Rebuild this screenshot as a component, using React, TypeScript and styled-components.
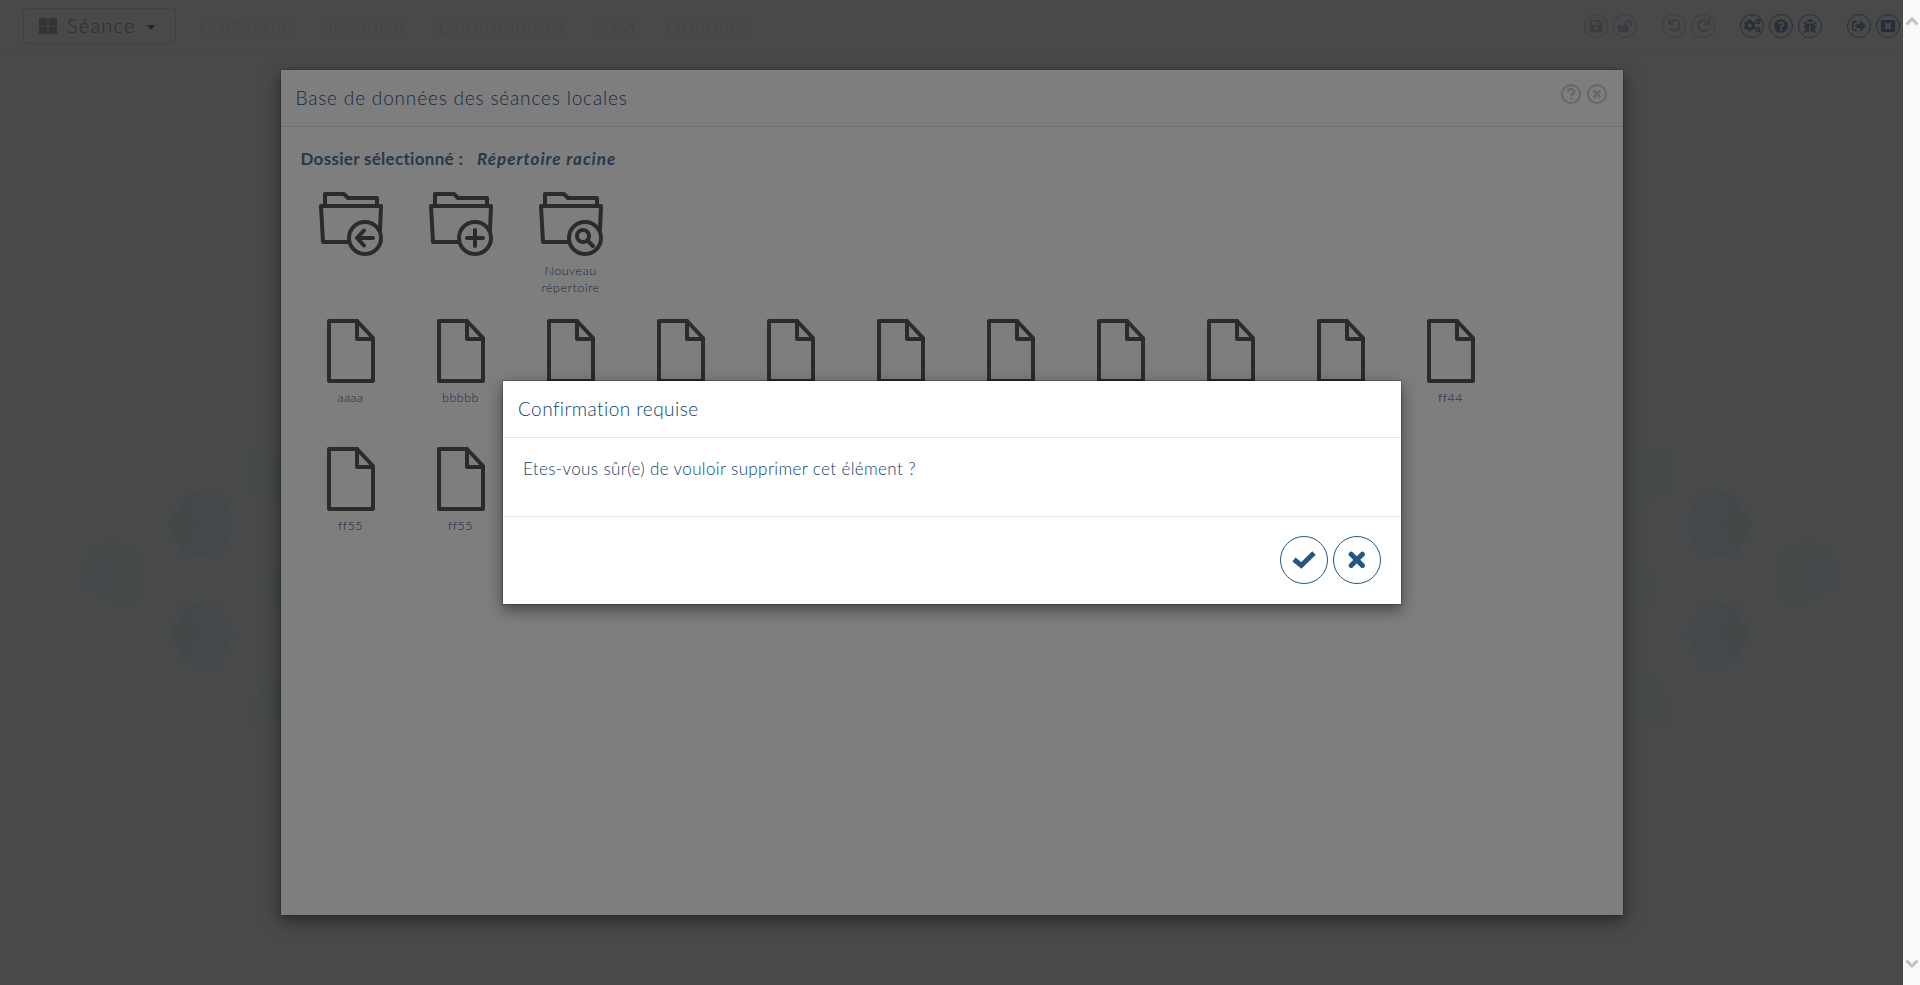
import React from 'react';
import styled, { createGlobalStyle } from 'styled-components';
import { FaSave, FaLockOpen, FaUndo, FaRedo, FaCogs, FaQuestionCircle, FaBug, FaSignOutAlt, FaWindowClose } from 'react-icons/fa';

const Global = createGlobalStyle`
  * { box-sizing: border-box; }
  html, body { margin: 0; padding: 0; }
  body { width: 1920px; height: 985px; overflow: hidden; background: #48494a; font-family: Lato, "Century Gothic", sans-serif; }
`;

const Screen = styled.div`
  position: relative;
  display: flex;
  width: 1920px;
  height: 985px;
  overflow: hidden;
`;

const Page = styled.div`
  width: 1903px;
  height: 985px;
  display: flex;
  flex-direction: column;
  align-items: center;
`;

const TopBar = styled.header`
  width: 100%;
  height: 53px;
  flex: none;
  display: flex;
  align-items: center;
  padding: 0 3px 1px 23px;
  background: #494949;
  border-bottom: 1px solid #454444;
`;

const SessionButton = styled.div`
  width: 153px;
  height: 36px;
  display: flex;
  align-items: center;
  padding-left: 15px;
  border: 1px solid #3f4041;
  border-radius: 4px;
  color: #2c2d2e;
`;

const Label = styled.span<{ $size: number; $ls?: number; $color?: string; $w?: number; $italic?: boolean }>`
  font-size: ${p => p.$size}px;
  letter-spacing: ${p => p.$ls ?? 0}px;
  color: ${p => p.$color ?? 'inherit'};
  font-weight: ${p => p.$w ?? 300};
  font-style: ${p => (p.$italic ? 'italic' : 'normal')};
  line-height: 1.2;
  white-space: nowrap;
`;

const SessionLabel = styled(Label)`
  width: 68px;
  margin-left: 10px;
  padding-bottom: 2px;
`;

const Caret = styled.i`
  margin-left: 12px;
  border: 4.5px solid transparent;
  border-top: 5px solid #252626;
  border-bottom: 0;
  margin-top: 3px;
`;

const Nav = styled.nav`
  display: flex;
  margin-left: 23px;
  padding-bottom: 2px;
  flex: 1;
`;

const NavItem = styled.div<{ $w: number }>`
  width: ${p => p.$w}px;
  flex: none;
`;

const Tools = styled.div`
  display: flex;
  gap: 25px;
`;

const ToolGroup = styled.div`
  display: flex;
  gap: 5px;
`;

const Tool = styled.div<{ $off?: boolean }>`
  width: 24px;
  height: 24px;
  display: flex;
  align-items: center;
  justify-content: center;
  border: 1px solid currentColor;
  border-radius: 50%;
  color: ${p => (p.$off ? '#393d41' : '#27303a')};
`;

const Panel = styled.section`
  width: 1342px;
  height: 845px;
  margin-top: 17px;
  flex: none;
  position: relative;
  background: #7e7e7e;
  box-shadow: 0 5px 15px rgba(0, 0, 0, 0.5), 0 0 0 1px rgba(0, 0, 0, 0.12);
`;

const PanelHead = styled.div<{ $line: string }>`
  height: 57px;
  display: flex;
  align-items: center;
  justify-content: space-between;
  padding: 1px 16px 1px 15px;
  border-bottom: 1px solid ${p => p.$line};
`;

const HeadIcons = styled.div`
  display: flex;
  gap: 6px;
  margin-top: -8px;
`;

const PanelBody = styled.div`
  padding: 22px 15px;
`;

const Folder = styled.div`
  display: flex;
  gap: 14px;
  padding-left: 5px;
  height: 43px;
  color: #26384a;
`;

const Grid = styled.div<{ $h?: number }>`
  display: flex;
  flex-wrap: wrap;
  width: 1210px;
  height: ${p => (p.$h ? `${p.$h}px` : 'auto')};
`;

const Item = styled.div`
  width: 110px;
  height: 128px;
  display: flex;
  flex-direction: column;
  align-items: center;
  color: #172a3e;
  text-align: center;
`;

const Caption = styled.div`
  margin-top: 6px;
  font-size: 12.5px;
  font-weight: 300;
  letter-spacing: 0.5px;
  line-height: 17px;
`;

const Dialog = styled.section`
  position: absolute;
  left: 503px;
  top: 381px;
  width: 898px;
  height: 223px;
  background: #fff;
  color: #0e3f70;
  box-shadow: 0 5px 15px rgba(0, 0, 0, 0.5), 0 0 0 1px rgba(0, 0, 0, 0.2);
`;

const DialogBody = styled.div`
  height: 79px;
  padding: 21px 20px;
  border-bottom: 1px solid #e1e4e4;
`;

const DialogFoot = styled.div`
  display: flex;
  justify-content: flex-end;
  gap: 5px;
  padding: 19px 20px;
`;

const Round = styled.div`
  width: 48px;
  height: 48px;
  display: flex;
  align-items: center;
  justify-content: center;
  border: 1px solid #24567f;
  border-radius: 50%;
`;

const Scroll = styled.aside`
  width: 17px;
  height: 985px;
  display: flex;
  flex-direction: column;
  justify-content: space-between;
  align-items: center;
  padding: 17px 0;
  background: #f9f9f9;
`;

const Backdrop = styled.svg`
  position: absolute;
  left: 0;
  top: 0;
  z-index: -1;
`;

const Shapes = () => (
  <g>
    <g fill="#45494a">
      <path d="M186 492l36 1 10 32-10 28-36 5-18-33z" />
      <path d="M186 603l34 4 13 29-18 31-32-5-13-27z" />
      <path d="M92 548l22-6 28 18-4 36-18 8-36-20z" />
      <path d="M250 452h40v60l-40-26z" />
      <path d="M290 555l-24 20 6 30 18 10zM290 667l-22 12-14 22 2 20h34z" />
    </g>
    <g fill="#43484b">
      <path d="M190 494l32 2 10 28-10 28-36 4-17-30z" />
      <path d="M188 605l31 4 13 27-18 29-30-6-13-25z" />
      <path d="M92 566l12 2 8 16-12 8-10-10z" />
    </g>
    <g fill="#424748">
      <path d="M186 496l10 29-13 24-14-24z" />
      <path d="M187 608l11 26-14 24-12-24z" />
    </g>
  </g>
);

const strokeProps = { fill: 'none', stroke: '#2b2b2b', strokeWidth: 4, strokeLinejoin: 'round' as const, strokeLinecap: 'round' as const };

const FileIcon = () => (
  <svg width="64" height="64" viewBox="0 0 64 64" {...strokeProps}>
    <path d="M10 2h28l16 17v43H10z" />
    <path d="M38 2v18h16" />
  </svg>
);

const FolderIcon = ({ kind }: { kind: 'back' | 'add' | 'find' }) => (
  <svg width="64" height="64" viewBox="0 0 64 64" {...strokeProps}>
    <path d="M6 13V2h19l4 4h29v7" />
    <path d="M29 50H4L2 14h60l-1 24" />
    <circle cx="46" cy="46" r="16" />
    {kind === 'back' && <path d="M54 46H39M45 38.5L38 46l7 7.5" />}
    {kind === 'add' && <path d="M46 38v16M38 46h16" />}
    {kind === 'find' && <><circle cx="44" cy="44" r="6" /><path d="M48.5 48.5L54 54" /></>}
  </svg>
);

const names = ['aaaa', 'bbbbb', '', '', '', '', '', '', '', '', 'ff44', 'ff55', 'ff55'];
const nav: [string, number, number][] = [['Protocole', 123, 1.4], ['Scenario', 116, 1.2], ['Déploiement', 156, 1.5], ['Suivi', 72, 0.2], ['Données', 90, 1.1]];

export default function App() {
  return (
    <Screen>
      <Global />
      <Backdrop width="1903" height="985">
        <Shapes />
        <g transform="translate(1920 0) scale(-1 1)"><Shapes /></g>
      </Backdrop>
      <Page>
        <TopBar>
          <SessionButton>
            <svg width="18" height="16" fill="#323334"><path d="M0 0h8.5v7.5H0zM9.5 0H18v7.5H9.5zM0 8.5h8.5V16H0zM9.5 8.5H18V16H9.5z" /></svg>
            <SessionLabel $size={20} $ls={1.2}>Séance</SessionLabel>
            <Caret />
          </SessionButton>
          <Nav>
            {nav.map(([t, w, ls]) => <NavItem key={t} $w={w}><Label $size={20} $ls={ls} $color="#424344">{t}</Label></NavItem>)}
          </Nav>
          <Tools>
            <ToolGroup><Tool $off><FaSave size={14} /></Tool><Tool $off><FaLockOpen size={14} /></Tool></ToolGroup>
            <ToolGroup><Tool $off><FaUndo size={13} /></Tool><Tool $off><FaRedo size={13} /></Tool></ToolGroup>
            <ToolGroup><Tool><FaCogs size={17} /></Tool><Tool><FaQuestionCircle size={14} /></Tool><Tool><FaBug size={14} /></Tool></ToolGroup>
            <ToolGroup><Tool><FaSignOutAlt size={14} /></Tool><Tool><FaWindowClose size={14} /></Tool></ToolGroup>
          </Tools>
        </TopBar>
        <Panel>
          <PanelHead $line="#6f7070">
            <Label $size={19} $ls={0.83} $color="#172a3e">Base de données des séances locales</Label>
            <HeadIcons>
              <svg width="20" height="20" fill="none" stroke="#666767" strokeWidth="2"><circle cx="10" cy="10" r="9" /><path d="M7 8c0-4 6.3-3.600 6.300-.4 0 2-3 2.100-3 4.400M10.200 13.200v2.300" strokeWidth="2.500" /></svg>
              <svg width="20" height="20" fill="none" stroke="#666767" strokeWidth="2"><circle cx="10" cy="10" r="9" /><path d="M6.500 6.500l7 7M13.500 6.500l-7 7" strokeWidth="2.600" /></svg>
            </HeadIcons>
          </PanelHead>
          <PanelBody>
            <Folder>
              <Label $size={17} $w={700} $ls={0.3}>Dossier sélectionné :</Label>
              <Label $size={17} $w={700} $ls={1} $italic>Répertoire racine</Label>
            </Folder>
            <Grid $h={127}>
              <Item><FolderIcon kind="back" /></Item>
              <Item><FolderIcon kind="add" /></Item>
              <Item><FolderIcon kind="find" /><Caption>Nouveau<br />répertoire</Caption></Item>
            </Grid>
            <Grid>
              {names.map((n, i) => <Item key={i}><FileIcon /><Caption>{n}</Caption></Item>)}
            </Grid>
          </PanelBody>
        </Panel>
      </Page>
      <Scroll>
        <svg width="12" height="9" fill="none" stroke="#c0c0c0" strokeWidth="3"><path d="M.5 7.500L6 2l5.500 5.500" /></svg>
        <svg width="12" height="9" fill="none" stroke="#c0c0c0" strokeWidth="3"><path d="M.5 1.500L6 7l5.500-5.500" /></svg>
      </Scroll>
      <Dialog>
        <PanelHead $line="#e1e4e4"><Label $size={19} $ls={0.45}>Confirmation requise</Label></PanelHead>
        <DialogBody><Label $size={17} $ls={0.38}>Etes-vous sûr(e) de vouloir supprimer cet élément ?</Label></DialogBody>
        <DialogFoot>
          <Round><svg width="24" height="18" fill="none" stroke="#24567f" strokeWidth="5" strokeLinejoin="miter"><path d="M2 8.500l7.300 6L22 2" /></svg></Round>
          <Round><svg width="18" height="18" fill="none" stroke="#24567f" strokeWidth="5" strokeLinecap="round"><path d="M3.200 3.200l11.200 11.200M14.400 3.200L3.200 14.400" /></svg></Round>
        </DialogFoot>
      </Dialog>
    </Screen>
  );
}
